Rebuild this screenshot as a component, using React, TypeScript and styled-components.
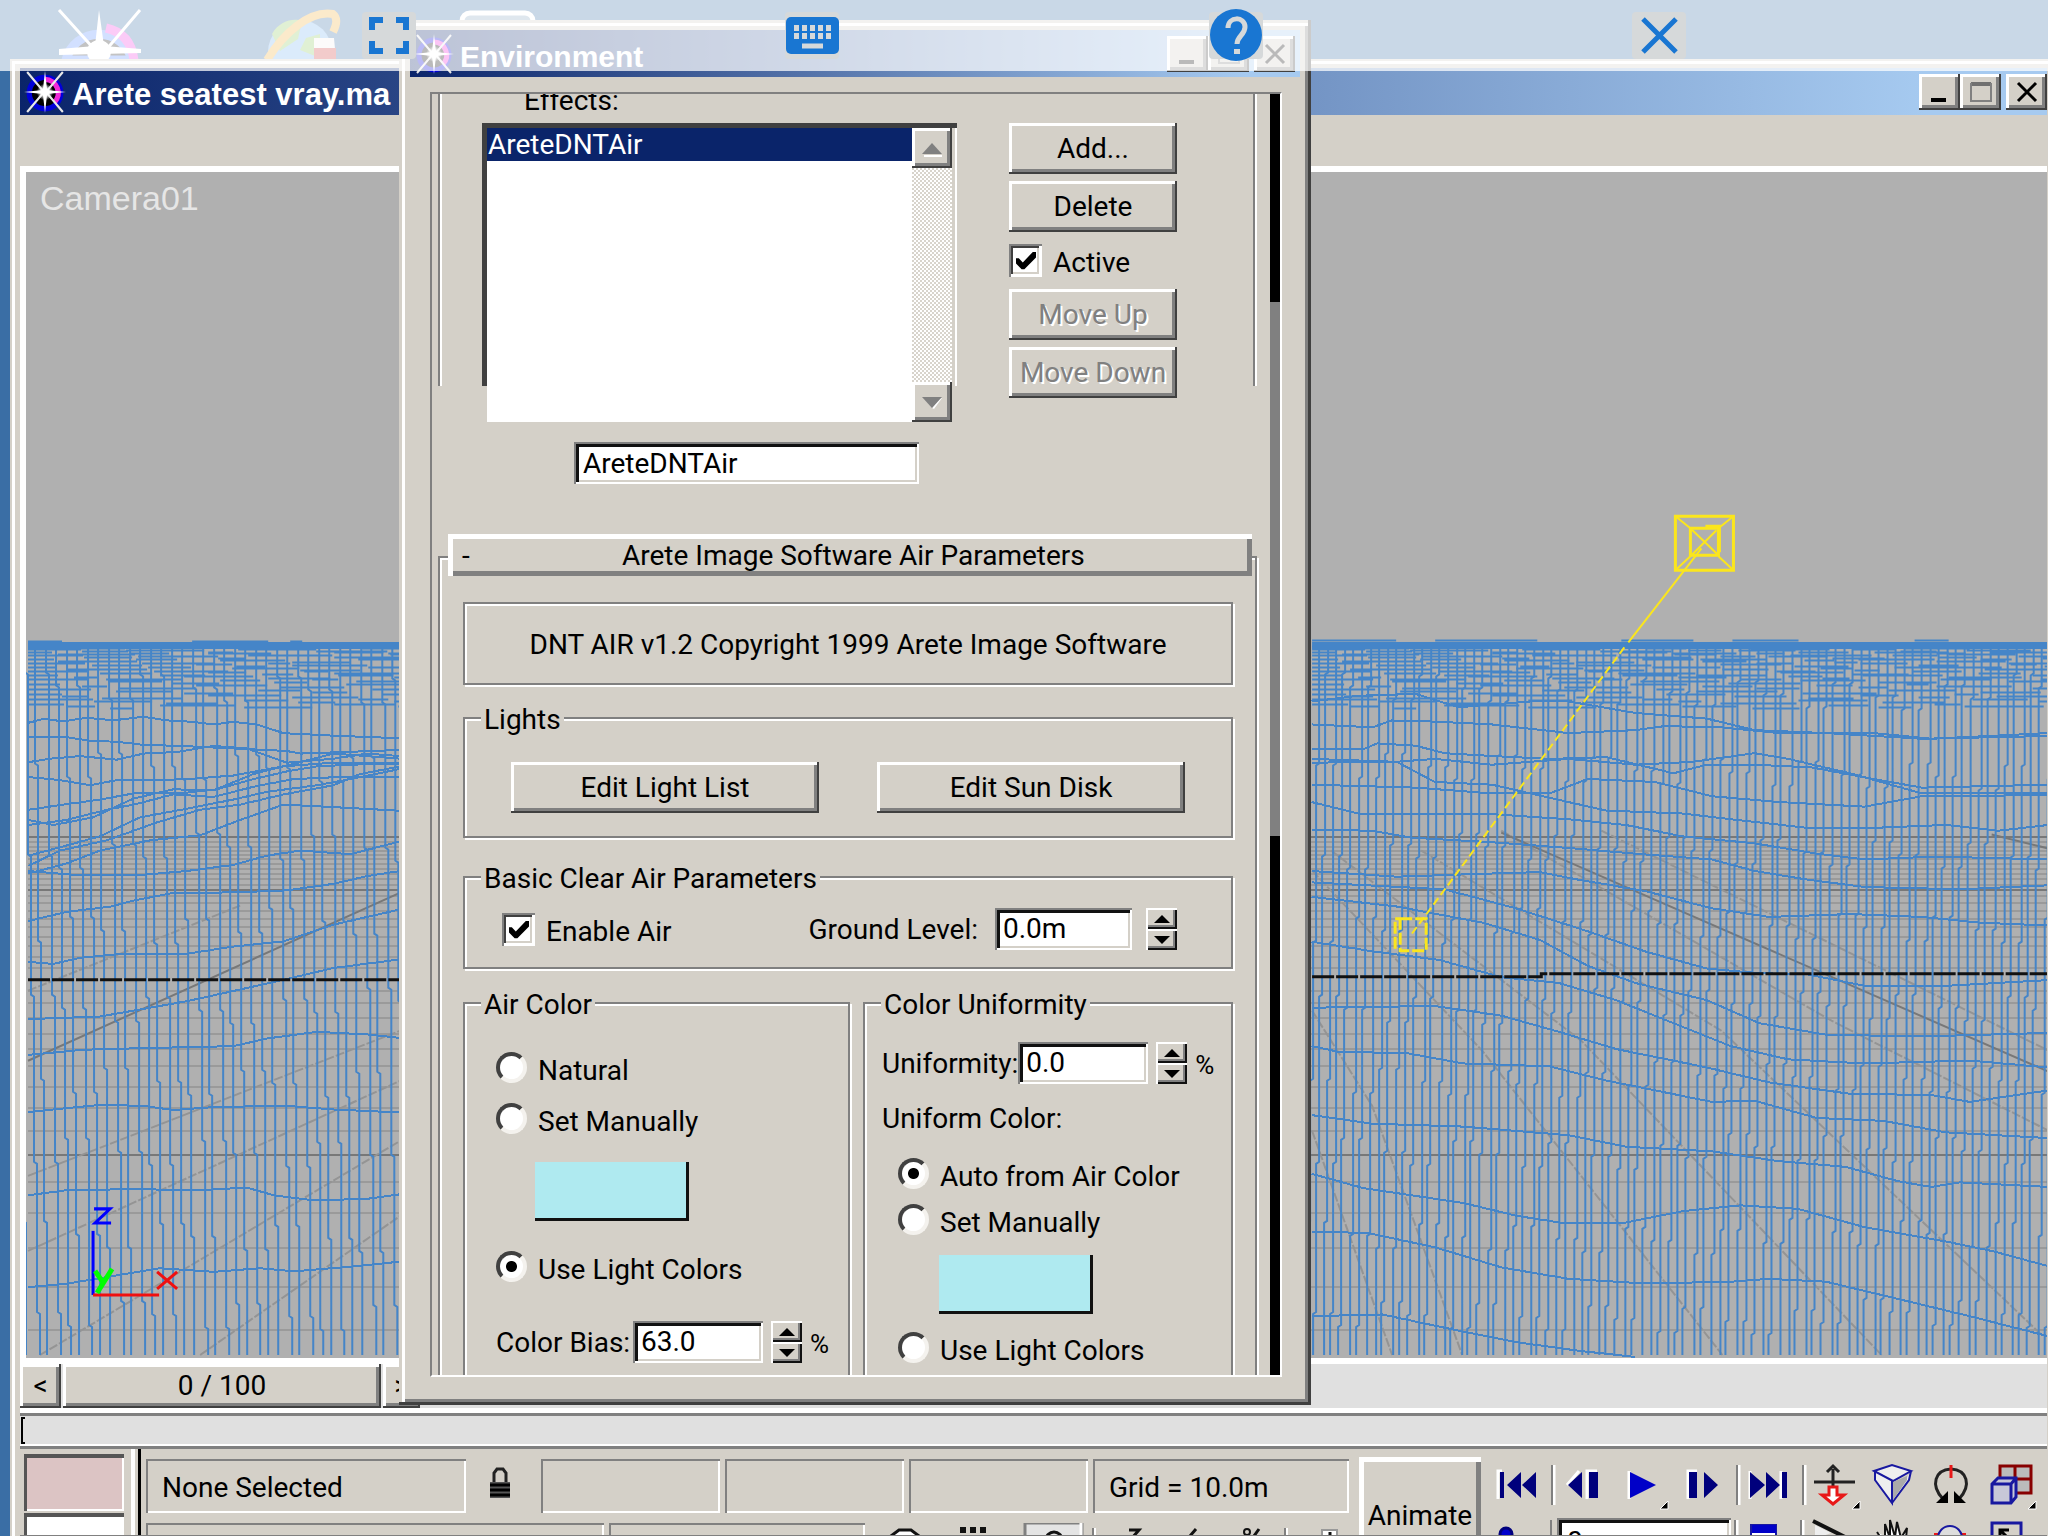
import React from "react";
import styled, { createGlobalStyle, css } from "styled-components";

const face = "#d4d0c8";
const shade = "#808080";
const dark = "#404040";
const wire = "#4585c8";
const ui = 'Roboto, "Liberation Sans", Arial, sans-serif';

const Global = createGlobalStyle`
  * { box-sizing: border-box; }
  body { margin: 0; background: #3a6ea5; overflow: hidden; }
  button, input { font: inherit; color: inherit; margin: 0; }
`;

const raised = css`
  background: ${face};
  border: 0;
  box-shadow: inset -2px -2px ${dark}, inset 3px 3px #fff, inset -5px -5px ${shade};
`;
const sunken = css`
  box-shadow: inset 2px 2px ${shade}, inset -2px -2px #fff, inset 5px 5px #111, inset -4px -4px ${face};
`;
const etched = css`
  border: 2px solid ${shade};
  box-shadow: inset 2px 2px #fff, 2px 2px #fff;
`;

const Desktop = styled.div`
  position: relative;
  height: 100vh;
  overflow: hidden;
  padding: 59px 0 0 10px;
  background: #3a6ea5;
  font: 28px/32px ${ui};
  color: #000;
`;
const DesktopArt = styled.svg`
  position: absolute;
  left: 0;
  top: 0;
`;

/* ---------- main window ---------- */
const MainWindow = styled.main`
  position: relative;
  height: 100%;
  display: flex;
  flex-direction: column;
  padding: 9px 1px 0 10px;
  background: ${face};
  box-shadow: inset 2px 2px ${face}, inset 5px 5px #fff;
`;
const TitleBar = styled.header<{ $size: number; $inset?: number }>`
  flex: none;
  display: flex;
  align-items: center;
  height: 47px;
  padding: 0 ${(p) => p.$inset || 0}px 0 4px;
  background: linear-gradient(90deg, #0a246a, #a6caf0 94%);
  color: #fff;
  font: bold ${(p) => p.$size}px/36px "Liberation Sans", Arial, sans-serif;
  white-space: nowrap;
`;
const Title = styled.h1`
  flex: 1;
  margin: 0 0 0 6px;
  padding-top: 6px;
  font: inherit;
`;
const Caption = styled.div`
  display: flex;
  color: #000;
`;
const CaptionButton = styled.button<{ $apart?: boolean }>`
  ${raised}
  width: 41px;
  height: 36px;
  padding: 0;
  margin-left: ${(p) => (p.$apart ? 5 : 0)}px;
  display: grid;
  place-items: center;
`;
const MenuGap = styled.div`
  flex: none;
  height: 51px;
`;
const Viewport = styled.section`
  position: relative;
  flex: 1;
  min-height: 0;
  border: 6px solid #fff;
  border-right: 0;
  background: #b0b0b0;
  overflow: hidden;
`;
const Scene = styled.svg`
  display: block;
  width: 100%;
  height: 100%;
`;
const CameraLabel = styled.h2`
  position: absolute;
  left: 14px;
  top: 6px;
  margin: 0;
  font: 34px/40px "Liberation Sans", Arial, sans-serif;
  color: #e6e6e6;
`;
const TimeRow = styled.div`
  flex: none;
  display: flex;
  gap: 2px;
  height: 44px;
  background: #e0e0e0;
`;
const TimeButton = styled.button<{ $w: number }>`
  ${raised}
  width: ${(p) => p.$w}px;
  padding: 0;
`;
const TrackBar = styled.div`
  flex: none;
  height: 41px;
  background: #e0e0e0;
  border-top: 5px solid #fff;
  border-bottom: 3px solid ${shade};
  box-shadow: inset 0 3px ${shade}, inset 0 -2px #fff;
  padding: 4px 0 2px 1px;
`;
const TrackStart = styled.div`
  width: 4px;
  height: 27px;
  border: 2px solid #000;
  border-right: 0;
`;

/* ---------- status area ---------- */
const Status = styled.footer`
  flex: none;
  display: flex;
  height: 87px;
  overflow: hidden;
  border-bottom: 1px solid ${shade};
`;
const Pads = styled.div`
  flex: none;
  width: 111px;
  padding: 5px 7px 0 4px;
  display: flex;
  flex-direction: column;
  gap: 2px;
`;
const Pad = styled.div<{ $c: string }>`
  flex: none;
  height: 57px;
  background: ${(p) => p.$c};
  box-shadow: inset 3px 4px #555, inset -2px -2px #fff;
`;
const Divider = styled.div`
  flex: none;
  width: 10px;
  margin-right: 5px;
  border-left: 4px solid #fff;
  border-right: 3px solid #000;
`;
const Info = styled.div`
  flex: 1;
  min-width: 0;
  display: flex;
  flex-direction: column;
  gap: 10px;
  padding-top: 10px;
`;
const InfoRow = styled.div`
  flex: none;
  display: flex;
  gap: 5px;
  height: 54px;
`;
const Field = styled.div<{ $w: number }>`
  flex: none;
  width: ${(p) => p.$w}px;
  padding: 13px 0 0 16px;
  box-shadow: inset 2px 2px ${shade}, inset -2px -2px #fff;
  white-space: nowrap;
`;
const LockButton = styled.button`
  flex: none;
  width: 65px;
  padding: 0 8px 0 0;
  border: 0;
  background: none;
`;
const ToolIcons = styled.svg`
  display: block;
  flex: none;
`;
const Animate = styled.button`
  ${raised}
  flex: none;
  width: 122px;
  height: 116px;
  margin: 8px 12px 0 10px;
  padding: 2px 0 0;
  box-shadow: inset 5px 5px #fff, inset -5px -5px ${shade};
`;
const Controls = styled.div`
  flex: none;
  width: 554px;
  padding-top: 12px;
`;
const FrameRow = styled.div`
  display: flex;
  margin-top: 7px;
`;
const FrameInput = styled.input`
  ${sunken}
  width: 174px;
  height: 46px;
  border: 0;
  padding: 4px 10px;
  background: #fff;
`;

/* ---------- Environment dialog ---------- */
const Dialog = styled.section`
  position: absolute;
  left: 399px;
  top: 20px;
  bottom: 131px;
  width: 912px;
  display: flex;
  flex-direction: column;
  padding: 10px 11px 28px;
  background: ${face};
  box-shadow: inset -3px -3px ${dark}, inset 3px 3px ${face}, inset 6px 6px #fff, inset -6px -6px ${shade};
`;
const Panel = styled.div`
  flex: 1;
  min-height: 0;
  display: flex;
  margin: 15px 18px 0 20px;
  border: 2px solid;
  border-color: ${shade} #fff #fff ${shade};
  overflow: hidden;
`;
const Scrolled = styled.div`
  flex: 1;
  height: 100%;
  overflow: hidden;
  padding: 0 15px 0 6px;
`;
const ScrollStrip = styled.div`
  width: 10px;
  background: linear-gradient(#000 208px, ${shade} 208px 742px, #000 742px);
`;
const EffectsFrame = styled.div`
  display: flow-root;
  height: 292px;
  border: 2px solid ${shade};
  border-width: 0 2px;
  box-shadow: inset 2px 0 #fff, 2px 0 #fff;
`;
const EffectsLabel = styled.div`
  margin-top: -9px;
  padding-left: 84px;
`;
const EffectsBody = styled.div`
  display: flex;
  align-items: flex-start;
  gap: 52px;
  padding: 6px 0 0 42px;
`;
const ListFrame = styled.div`
  flex: none;
  width: 475px;
  height: 263px;
  border: 0 solid ${dark};
  border-width: 5px 0 0 5px;
  box-shadow: inset -2px 0 #fff;
`;
const ListInner = styled.div`
  display: flex;
  width: 465px;
  height: 294px;
  background: #fff;
`;
const List = styled.ul`
  flex: 1;
  margin: 0;
  padding: 0;
  list-style: none;
`;
const ListItem = styled.li`
  height: 33px;
  line-height: 34px;
  padding-left: 1px;
  background: #0a246a;
  color: #fff;
`;
const ScrollBar = styled.div`
  width: 40px;
  display: flex;
  flex-direction: column;
  justify-content: space-between;
  background: repeating-conic-gradient(#fff 0 25%, #d8d4cc 0 50%) 0 0 / 4px 4px;
`;
const ScrollButton = styled.button`
  ${raised}
  height: 40px;
  padding: 0;
`;
const Side = styled.div`
  display: flex;
  flex-direction: column;
  gap: 7px;
`;
const Push = styled.button<{ $w: number }>`
  ${raised}
  width: ${(p) => p.$w}px;
  height: 51px;
  padding: 0;
  white-space: nowrap;
  &:disabled {
    color: ${shade};
    text-shadow: 2px 2px #fff;
  }
`;
const Choice = styled.label<{ $gap?: number; $after?: number }>`
  display: flex;
  align-items: flex-start;
  gap: 11px;
  height: 32px;
  line-height: 37px;
  margin-top: ${(p) => p.$gap || 0}px;
  margin-bottom: ${(p) => p.$after || 0}px;
  white-space: nowrap;
`;
const Check = styled.input`
  appearance: none;
  width: 33px;
  height: 33px;
  background: #fff;
  box-shadow: inset 2px 2px ${shade}, inset -3px -3px #fff, inset 4px 4px ${dark}, inset -5px -5px ${face};
  &:checked::before {
    content: "";
    display: block;
    width: 20px;
    height: 19px;
    margin: 7px 0 0 7px;
    background: #000;
    clip-path: polygon(0 38%, 14% 38%, 34% 60%, 84% 5%, 100% 5%, 100% 34%, 42% 96%, 28% 96%, 0 66%);
  }
`;
const Radio = styled.input`
  appearance: none;
  width: 31px;
  height: 31px;
  border-radius: 50%;
  border: 4px solid;
  border-color: ${dark} #f4f2ee #f4f2ee ${dark};
  background: #fff;
  &:checked {
    background: radial-gradient(#000 5px, #fff 6px);
  }
`;
const NameInput = styled.input`
  ${sunken}
  display: block;
  width: 345px;
  height: 42px;
  margin: 56px 0 0 136px;
  border: 0;
  padding: 0 9px;
  background: #fff;
`;
const Rollout = styled.div`
  ${etched}
  margin: 72px -2px 0 0;
  padding: 0 22px 0 23px;
  height: 900px;
`;
const RolloutHeader = styled.button`
  display: flex;
  width: calc(100% + 34px);
  height: 42px;
  margin: -24px -19px 26px -15px;
  padding: 2px 15px 0 14px;
  align-items: center;
  border: 0;
  background: ${face};
  box-shadow: inset 5px 5px #fff, inset -5px -5px ${shade};
`;
const RolloutTitle = styled.span`
  flex: 1;
  text-align: center;
`;
const Notice = styled.p`
  ${etched}
  height: 83px;
  margin: 0 0 15px;
  text-align: center;
  line-height: 82px;
`;
const Group = styled.fieldset<{ $gap?: number }>`
  ${etched}
  min-width: 0;
  margin: 0 0 ${(p) => p.$gap || 0}px;
  padding: 0;
`;
const GroupBody = styled.div<{ $pad: string }>`
  padding: ${(p) => p.$pad};
`;
const Legend = styled.legend`
  margin-left: 16px;
  padding: 4px 3px 0;
  background: ${face};
  line-height: 32px;
`;
const Row = styled.div<{ $gap?: number }>`
  display: flex;
  align-items: center;
  margin-top: ${(p) => p.$gap || 0}px;
  white-space: nowrap;
`;
const Spread = styled(Row)`
  justify-content: space-between;
`;
const Columns = styled.div`
  display: grid;
  grid-template-columns: 387px 1fr;
  gap: 13px;
`;
const Indent = styled.div`
  padding-left: 16px;
`;
const NumInput = styled.input<{ $wide?: boolean }>`
  ${sunken}
  width: ${(p) => (p.$wide ? 137 : 130)}px;
  height: 42px;
  border: 0;
  margin-left: ${(p) => (p.$wide ? 0 : "auto")};
  margin-right: ${(p) => (p.$wide ? 14 : 8)}px;
  padding: 0 8px 2px;
  background: #fff;
`;
const NumLabel = styled.label<{ $end?: boolean }>`
  padding-top: 2px;
  margin-left: ${(p) => (p.$end ? "auto" : 0)};
  margin-right: ${(p) => (p.$end ? 17 : 0)}px;
`;
const Spinner = styled.span`
  display: flex;
  flex-direction: column;
`;
const SpinButton = styled.button`
  width: 31px;
  height: 21px;
  padding: 0;
  border: 0;
  background: ${face};
  box-shadow: inset 2px 2px #fff, inset -2px -2px #111, inset -4px -4px ${shade};
  display: grid;
  place-items: center;
`;
const Percent = styled.span`
  width: 20px;
  margin-left: 8px;
  padding-top: 4px;
  font-size: 26px;
`;
const Swatch = styled.button<{ $gap: number; $left: number }>`
  display: block;
  width: 154px;
  height: 59px;
  margin: ${(p) => p.$gap}px 0 0 ${(p) => p.$left}px;
  padding: 0;
  border: 0;
  background: #afeaf0;
  box-shadow: inset -3px -3px #111;
`;

/* ---------- remote-control overlay ---------- */
const Overlay = styled.nav`
  position: absolute;
  left: 0;
  right: 0;
  top: 0;
  height: 71px;
  display: flex;
  justify-content: space-between;
  align-items: flex-start;
  padding: 12px 362px 0;
  background: rgba(255, 255, 255, 0.73);
`;
const OverlayButton = styled.button`
  width: 54px;
  height: 47px;
  padding: 0;
  border: 0;
  border-radius: 4px;
  background: #d6d9da;
  svg {
    display: block;
    overflow: visible;
  }
`;

/* ---------- drawings ---------- */
const Star = ({ size, id }: { size: number; id: string }) => (
  <svg width={size} height={size} viewBox="0 0 40 40" aria-hidden="true">
    <defs>
      <radialGradient id={id}>
        <stop offset="0" stopColor="#fff" />
        <stop offset="0.4" stopColor="#fff" />
        <stop offset="1" stopColor="#fff" stopOpacity="0" />
      </radialGradient>
    </defs>
    <circle cx="20" cy="21" r="15" fill="#000" stroke="#0000d8" strokeWidth="5" />
    <path d="M20 8a13 13 0 0 1 9 22" fill="none" stroke="#f028d8" strokeWidth="5" />
    <path d="M3 1l16 19M37 1L21 20M3 39l16-19M37 39L21 20" stroke="#e8e8e8" strokeWidth="2" />
    <path d="M20 0l2 18 18 2-18 2-2 18-2-18-18-2 18-2z" fill="#fff" />
    <circle cx="20" cy="20" r="8" fill={`url(#${id})`} />
  </svg>
);

const MinIcon = () => (
  <svg width="22" height="22" aria-hidden="true"><path d="M2 19h15" stroke="currentColor" strokeWidth="4" /></svg>
);
const MaxIcon = () => (
  <svg width="24" height="24" aria-hidden="true"><path d="M2 4h20" stroke="#707070" strokeWidth="4" /><path d="M2 3v18h20V3" fill="none" stroke="#808080" strokeWidth="2" /></svg>
);
const CloseIcon = () => (
  <svg width="22" height="22" aria-hidden="true"><path d="M2 2l18 18M20 2L2 20" stroke="currentColor" strokeWidth="3" /></svg>
);
const Arrow = ({ down, dim }: { down?: boolean; dim?: boolean }) => (
  <svg width={dim ? 22 : 16} height={dim ? 16 : 8} viewBox={dim ? "-1 -2 22 16" : "0 0 16 8"} aria-hidden="true">
    {dim && <path d={down ? "M20 1L12 12l-2-1 8-10z" : "M2 12h18v2H2z"} fill="#fff" />}
    <path d={dim ? (down ? "M0 0h20L10 11z" : "M0 11h20L10 0z") : down ? "M0 0h16L8 8z" : "M0 8h16L8 0z"} fill={dim ? shade : "#000"} />
  </svg>
);

type Pt = [number, number];
const pts = (s: string) => s.split(" ").map((p) => p.split(",").map(Number) as Pt);
const L = (s: string) => pts(s).map(([x, y]) => `${(x / 3).toFixed(1)},${(600 + y / 1.96).toFixed(1)}`).join(" ");
const R = (s: string) => pts(s).map(([x, y]) => `${(1300 + x / 2.096).toFixed(1)},${(480 + y / 1.742).toFixed(1)}`).join(" ");

const leftWaves = [
  "85,240 130,232 190,237 260,230 340,235 430,228 500,235 580,238 640,243 700,238 770,243 850,260 1000,265 1200,270",
  "85,267 190,267 270,275 350,277 430,283 540,285 700,290 860,295 900,300 1200,293",
  "85,317 150,310 240,305 350,312 430,300 530,297 640,285 740,290 860,318 1000,310 1100,300 1200,305",
  "85,346 180,352 270,362 350,352 460,352 560,350 700,343 850,325 1000,318 1200,320",
  "85,410 190,400 300,390 400,378 540,378 650,370 760,350 860,335 950,325 1200,318",
  "85,440 200,430 320,410 400,400 520,380 640,385 760,365 880,350 1050,345 1200,345",
  "85,430 160,440 280,425 400,388 520,370 640,372 760,340 880,320 1000,300 1200,310",
  "85,500 200,480 300,462 420,425 560,408 700,390 800,375 950,362 1050,350 1200,330",
  "85,520 180,490 320,470 470,435 600,410 720,400 850,380 1000,362 1080,340 1200,325",
  "85,535 200,515 300,490 450,470 600,460 720,430 850,400 1000,405 1200,412",
  "85,530 230,538 420,538 560,530 700,518 800,500 900,490 1050,497 1200,472",
  "85,628 200,610 330,600 400,588 520,573 700,572 860,568 1000,555 1100,540 1200,530",
  "85,708 160,712 240,700 370,692 560,692 700,678 850,668 1000,635 1200,605",
  "85,820 300,815 430,800 560,785 700,765 850,743 1000,720 1200,703",
  "85,890 250,880 430,877 700,873 800,858 950,845 1100,850 1200,857",
  "85,1002 190,995 300,988 430,990 520,998 650,992 860,990 1000,997 1200,1003",
  "85,1165 200,1155 400,1153 600,1155 740,1150 820,1165 940,1175 1100,1172 1200,1163",
  "85,1345 200,1338 350,1322 480,1308 640,1315 780,1308 880,1314 1050,1305 1200,1295",
];
const rightWaves = [
  "22,425 150,430 190,418 280,420 400,425 560,440 700,435 760,428 880,430 1000,440 1200,440 1320,450 1565,440",
  "22,385 120,375 240,372 330,395 480,385 560,385 700,405 850,415 950,435 1100,440 1300,450 1565,445",
  "22,468 130,468 160,458 240,462 300,475 400,480 520,485 640,482 780,510 850,495 950,495 1070,500 1200,520 1300,535 1565,530",
  "22,492 120,490 200,490 280,485 400,495 560,485 700,495 820,490 950,475 1020,485 1150,510 1300,545 1565,545",
  "22,485 200,490 280,525 400,530 480,545 560,560 640,575 800,580 900,590 1060,605 1200,605 1350,600 1460,610 1565,600",
  "22,530 240,535 400,545 520,545 600,520 740,525 860,550 1000,560 1180,568 1300,550 1565,548",
  "22,560 120,580 380,580 560,590 680,600 800,620 950,632 1080,650 1180,660 1330,655 1565,660",
  "22,608 150,610 230,622 400,630 560,640 700,650 860,660 950,680 1060,695 1180,708 1380,712 1565,705",
  "22,680 200,690 380,685 500,682 580,695 720,715 860,745 980,760 1150,755 1300,760 1420,770 1565,775",
  "22,700 300,712 450,745 600,785 720,820 850,850 960,858 1060,860 1180,880 1350,880 1565,870",
  "22,725 200,742 380,770 500,800 600,845 700,875 850,905 960,945 1100,965 1300,968 1565,962",
  "22,803 150,820 290,835 420,865 540,875 660,905 780,945 900,985 1020,1008 1180,1015 1400,1010 1565,1022",
  "22,918 280,915 420,932 540,960 660,990 850,1022 980,1048 1150,1068 1320,1070 1400,1082 1565,1062",
  "22,985 80,995 220,997 340,1015 520,1020 640,1045 760,1065 860,1082 950,1080 1080,1110 1220,1115 1350,1135 1565,1145",
  "22,1105 150,1120 340,1125 560,1140 680,1160 860,1168 1000,1185 1140,1195 1250,1220 1320,1230 1380,1222 1565,1230",
  "22,1207 130,1232 340,1258 450,1280 550,1293 680,1292 800,1272 920,1262 1040,1268 1180,1300 1350,1325 1450,1342 1565,1368",
  "22,1308 140,1310 280,1335 420,1370 560,1390 720,1398 900,1395 980,1390 1100,1395 1250,1425 1400,1455 1565,1490",
  "22,1455 170,1452 300,1475 450,1500 580,1515 700,1526",
];

const columns = (x0: number, x1: number, step: number, dir: number) => {
  const rows = [690, 770, 850, 925, 1005, 1078, 1150, 1235, 1315];
  let d = "";
  for (let i = 0, x = x0; x < x1; i++, x = x0 + i * step) {
    const band = Math.floor(i / 4);
    d += `M${Math.round(x)} 644`;
    rows.forEach((r, k) => {
      if ((band + i + k) % 2 === 0) return;
      const y = r + ((band * 13 + k * 11) % 37) - 18;
      d += `V${y}l${dir * 3} 2`;
    });
    d += "V1354";
  }
  return d;
};

/* Far waves: short broken runs that thicken towards the horizon. */
const ripples = (x0: number, x1: number) => {
  let d = "";
  for (let r = 0; r < 15; r++) {
    const y = 648 + r * 3 + Math.floor((r * r) / 12);
    for (let x = x0, i = 0; x < x1; i++) {
      const len = 22 + ((i * 53 + r * 31) % 60);
      const dy = ((i * 7 + r * 5) % 5) - 2;
      d += `M${x} ${y + dy}h${Math.min(len, x1 - x)}`;
      x += len + ((i * 13 + r * 7) % (4 + r * 2));
    }
  }
  return d;
};

const gridYs = [841, 846, 850, 854, 858, 863, 868, 873, 878, 884, 895, 902, 910, 918, 926, 936, 945, 956, 967, 990, 1002, 1017, 1033, 1048, 1065, 1086, 1107, 1130, 1181, 1212, 1247, 1286, 1329];

const Sea = () => (
  <Scene viewBox="26 172 2021 1185" preserveAspectRatio="xMinYMin slice" aria-hidden="true">
    <g shapeRendering="crispEdges">
      <path d={gridYs.map((y) => `M28 ${y}H2047`).join("")} stroke="#9a9a9a" strokeWidth="2" />
      <path d="M28 836H2047M28 889H2047M28 1154H2047" stroke="#787878" strokeWidth="2" />
    </g>
    <path d="M28 1175L400 1030M28 1250L400 1080M40 1354L400 1140M200 1354L400 1215M28 990L240 905M1311 1010l60 95 90 249M1311 870l170 180 240 304M1330 850l250 190 300 314M1420 850l300 180 320 304M1500 830l330 190 217 110M1600 830l447 220M1311 1130l80 224" fill="none" stroke="#949494" strokeWidth="2" strokeDasharray="9 2" />
    <path d="M28 1060L400 892M1500 832L2047 1071M1990 834l57 14" stroke="#787878" strokeWidth="2" fill="none" />
    <g fill="none" stroke={wire} strokeWidth="2">
      <path d={columns(14, 400, 10.5, 1) + columns(1318, 2070, 8.6, -1)} />
      <path d={ripples(28, 400) + ripples(1311, 2047)} />
      {leftWaves.map((w) => <polyline key={w} points={L(w)} shapeRendering="crispEdges" />)}
      {rightWaves.map((w) => <polyline key={w} points={R(w)} shapeRendering="crispEdges" />)}
      <path d="M28 641h34M192 641h76M290 641h12M1311 640h84M1434 640h102M1620 640h72M1731 640h66M1913 640h34" />
    </g>
    <path d="M28 645H400M1311 645H2047" stroke={wire} strokeWidth="7" />
    <path d="M28 979H400M1311 976H1540V973H2047" fill="none" stroke="#111" strokeWidth="3" strokeDasharray="22 2" />
    <g fill="none" stroke="#fbe61c" strokeWidth="3">
      <path d="M1674 516h58v54h-58z" />
      <path d="M1674 516l15 12M1732 516l-15 12M1674 570l15-14M1732 570l-15-14M1689 528l28 27M1715 530l-26 26" strokeWidth="2" />
      <path d="M1689 528h28v27h-28zM1704 526h14v26" />
      <path d="M1700 548L1627 642" strokeWidth="2" />
      <path d="M1623 647L1410 934" strokeDasharray="8 4" strokeWidth="2" />
      <path d="M1399 918h26v32h-26zM1394 948v-30h6" strokeDasharray="12 3" />
    </g>
    <g fill="none" strokeWidth="3">
      <path d="M93 1230v64" stroke="#00f" />
      <path d="M94 1208h16l-15 14h16" stroke="#00f" />
      <path d="M93 1294h66M157 1271l20 17M177 1271l-20 17" stroke="#f01010" />
      <path d="M95 1270l9 13M112 1268l-15 24" stroke="#0f0" strokeWidth="5" />
    </g>
  </Scene>
);

const PlaybackIcons = () => (
  <ToolIcons width="554" height="50" viewBox="1494 1460 554 50" aria-hidden="true">
    <g fill="none" stroke="#fff" strokeWidth="3">
      <path d="M1555 1464v40M1740 1464v40M1806 1464v40" />
      <path d="M1499 1498v-28h4M1568 1484l12-14M1588 1498v-28h10M1630 1498v-28M1689 1498v-28h9M1751 1498v-28M1782 1498v-28" />
    </g>
    <path d="M1553 1464v40M1738 1464v40M1804 1464v40" stroke={shade} strokeWidth="2" />
    <g fill="#00007c">
      <path d="M1501 1471h4v26h-4zM1522 1471v26l-14-13zM1537 1471v26l-14-13z" />
      <path d="M1583 1471v26l-14-13zM1590 1471h9v26h-9z" />
      <path d="M1690 1471h8v26h-8zM1705 1471v26l14-13z" />
      <path d="M1751 1471v26l15-13zM1767 1471v26l14-13zM1783 1471h5v26h-5z" />
    </g>
    <path d="M1631 1471v26l26-13z" fill="#0000c8" />
    <path d="M1669 1500v8h-8zM1861 1500v8h-8zM2037 1500v8h-8z" fill="#000" stroke="#fff" strokeWidth="1" />
    <path d="M1815 1481h41M1834 1490v-22M1828 1471l6-6 6 6" fill="none" stroke="#222" strokeWidth="3" />
    <path d="M1830 1486h8v8h7l-11 9-11-9h7z" fill="#fff" stroke="#e81818" strokeWidth="3" />
    <path d="M1875 1470l18-6 19 6-18 10zM1893 1480v22l-17-23v-9M1893 1502l17-23 2-9" fill="#eee" stroke="#1818a0" strokeWidth="2" />
    <path d="M1894 1481v18l14-20v-4z" fill="#aaa" />
    <path d="M1944 1498c-13-14-8-29 8-30 16 1 21 16 8 30" fill="none" stroke="#222" strokeWidth="3" />
    <path d="M1937 1502h12v-12zM1967 1502h-12v-12z" fill="#000" />
    <path d="M1952 1464v13" stroke="#e81818" strokeWidth="3" />
    <path d="M2001 1465h31v27h-31zM2016 1465v27M2001 1478h31" fill="#bbb" stroke="#880000" strokeWidth="3" />
    <path d="M1993 1483l6-6h18v19l-5 6h-19zM1993 1483h19v19M2012 1483l5-6" fill="#c8c8d8" stroke="#1818a0" strokeWidth="3" />
  </ToolIcons>
);

const NavIcons = () => (
  <ToolIcons width="310" height="30" viewBox="1734 1517 310 30" aria-hidden="true">
    <path d="M1740 1519v28M1806 1519v28" stroke="#fff" strokeWidth="3" />
    <path d="M1738 1519v28M1804 1519v28" stroke={shade} strokeWidth="2" />
    <path d="M1754 1524h25v20h-25z" fill="#fff" stroke="#1818a0" strokeWidth="2" />
    <path d="M1755 1524h24v8h-24z" fill="#0000c8" />
    <path d="M1816 1520l32 16" stroke="#111" strokeWidth="4" />
    <path d="M1818 1524l16 8-16 6z" fill="#eee" />
    <path d="M1880 1531l8 12v-20l5 14v-18l5 17 2-15 4 16 6-10-2 20" fill="#fff" stroke="#111" strokeWidth="2" />
    <path d="M1937 1534h32" stroke="#e81818" strokeWidth="4" />
    <circle cx="1953" cy="1537" r="12" fill="#ddd" stroke="#1818a0" strokeWidth="2" />
    <path d="M1995 1522h29v25h-29z" fill="#d4d0c8" stroke="#1818a0" strokeWidth="3" />
    <path d="M2003 1529l12 12M2003 1540v-11h9" fill="none" stroke="#000" strokeWidth="3" />
  </ToolIcons>
);

const SnapIcons = () => (
  <ToolIcons width="484" height="30" viewBox="870 1523 484 30" aria-hidden="true">
    <path d="M891 1536l8-6h12l8 6v12h-28z" fill="#fff" stroke="#111" strokeWidth="3" />
    <path d="M960 1530h26M960 1539h26" stroke="#111" strokeWidth="6" strokeDasharray="6 4" />
    <path d="M1025 1523h57v30h-57z" fill="#e4e4e4" stroke={shade} strokeWidth="3" />
    <path d="M1081 1523v30" stroke="#fff" strokeWidth="3" />
    <circle cx="1054" cy="1540" r="8" fill="none" stroke="#111" strokeWidth="3" />
    <path d="M1093 1528v20M1285 1528v20" stroke={shade} strokeWidth="2" />
    <path d="M1095 1528v20M1287 1528v20" stroke="#fff" strokeWidth="2" />
    <path d="M1129 1530h10l-7 8M1196 1529l-12 14M1259 1529l-10 14" fill="none" stroke="#111" strokeWidth="3" />
    <circle cx="1247" cy="1532" r="3" fill="none" stroke="#111" strokeWidth="2" />
    <path d="M1322 1530h15v15h-15z" fill="#fff" stroke="#999" strokeWidth="2" />
    <path d="M1330 1532v10" stroke="#111" strokeWidth="3" />
  </ToolIcons>
);

const Spin = ({ name }: { name: string }) => (
  <Spinner>
    <SpinButton aria-label={`Increase ${name}`}><Arrow /></SpinButton>
    <SpinButton aria-label={`Decrease ${name}`}><Arrow down /></SpinButton>
  </Spinner>
);

export default function App() {
  return (
    <>
      <Global />
      <Desktop>
        <DesktopArt width="560" height="60" viewBox="0 0 560 60" aria-hidden="true">
          <path d="M66 60a34 34 0 0 1 66 0z" fill="#222" stroke="#5a8cff" strokeWidth="9" />
          <path d="M106 28c18 4 26 16 28 32" fill="none" stroke="#f040e0" strokeWidth="9" />
          <path d="M59 10l36 40M140 10l-34 40" stroke="#fff" strokeWidth="3" />
          <path d="M99 10l5 36 37 3v4l-82 2v-6l36-3z" fill="#fff" />
          <circle cx="99" cy="52" r="12" fill="#fff" />
          <circle cx="300" cy="52" r="32" fill="#7ab4f0" />
          <path d="M272 34c8-14 22-16 30-13l-4 18-18 12zM300 50l20 8v-24l-14 4z" fill="#8cc860" />
          <path d="M267 60c16-26 42-50 66-46 5 4 3 12 0 18" fill="none" stroke="#f0b040" strokeWidth="8" />
          <path d="M314 38h20l2 22h-22z" fill="#f4f0f0" />
          <path d="M314 48h22v12h-22z" fill="#d04040" />
          <rect x="462" y="13" width="71" height="40" rx="8" fill="#8aa8c0" stroke="#fff" strokeWidth="5" />
        </DesktopArt>

        <MainWindow>
          <TitleBar $size={31}>
            <Star size={42} id="starMain" />
            <Title>Arete seatest vray.ma</Title>
            <Caption>
              <CaptionButton aria-label="Minimize"><MinIcon /></CaptionButton>
              <CaptionButton aria-label="Maximize"><MaxIcon /></CaptionButton>
              <CaptionButton aria-label="Close" $apart><CloseIcon /></CaptionButton>
            </Caption>
          </TitleBar>
          <MenuGap />
          <Viewport>
            <Sea />
            <CameraLabel>Camera01</CameraLabel>
          </Viewport>
          <TimeRow>
            <TimeButton $w={41} aria-label="Previous frame">&lt;</TimeButton>
            <TimeButton $w={318}>0 / 100</TimeButton>
            <TimeButton $w={37} aria-label="Next frame">&gt;</TimeButton>
          </TimeRow>
          <TrackBar><TrackStart /></TrackBar>
          <Status>
            <Pads>
              <Pad $c="#dcc4c4" />
              <Pad $c="#fff" />
            </Pads>
            <Divider />
            <Info>
              <InfoRow>
                <Field $w={320}>None Selected</Field>
                <LockButton aria-label="Lock selection">
                  <svg width="24" height="32" viewBox="0 0 24 32" aria-hidden="true">
                    <path d="M6 16V6l3-4h6l3 4v10" fill="none" stroke="#222" strokeWidth="3" />
                    <path d="M2 15h20v16H2z" fill="#555" />
                    <path d="M2 18h20M2 23h20M2 28h20" stroke="#000" strokeWidth="3" />
                  </svg>
                </LockButton>
                <Field $w={179} />
                <Field $w={179} />
                <Field $w={179} />
                <Field $w={256}>Grid = 10.0m</Field>
              </InfoRow>
              <InfoRow>
                <Field $w={458} />
                <Field $w={256} />
                <SnapIcons />
              </InfoRow>
            </Info>
            <Animate>Animate</Animate>
            <Controls>
              <PlaybackIcons />
              <FrameRow>
                <ToolIcons width="64" height="30" viewBox="1494 1517 64 30" aria-hidden="true">
                  <circle cx="1507" cy="1533" r="6" fill="#00c" stroke="#00007c" strokeWidth="3" />
                  <path d="M1513 1536h20" stroke="#fff" strokeWidth="4" />
                  <path d="M1552 1519v28" stroke={shade} strokeWidth="2" />
                </ToolIcons>
                <FrameInput aria-label="Current frame" defaultValue="0" />
                <NavIcons />
              </FrameRow>
            </Controls>
          </Status>
        </MainWindow>

        <Dialog>
          <TitleBar $size={30} $inset={5}>
            <Star size={40} id="starDialog" />
            <Title>Environment</Title>
            <Caption>
              <CaptionButton aria-label="Minimize dialog"><MinIcon /></CaptionButton>
              <CaptionButton aria-label="Maximize dialog"><MaxIcon /></CaptionButton>
              <CaptionButton aria-label="Close dialog" $apart><CloseIcon /></CaptionButton>
            </Caption>
          </TitleBar>
          <Panel>
            <Scrolled>
              <EffectsFrame>
                <EffectsLabel>Effects:</EffectsLabel>
                <EffectsBody>
                  <ListFrame>
                    <ListInner>
                      <List role="listbox" aria-label="Effects">
                        <ListItem role="option" aria-selected="true">AreteDNTAir</ListItem>
                      </List>
                      <ScrollBar>
                        <ScrollButton aria-label="Scroll up"><Arrow dim /></ScrollButton>
                        <ScrollButton aria-label="Scroll down"><Arrow dim down /></ScrollButton>
                      </ScrollBar>
                    </ListInner>
                  </ListFrame>
                  <Side>
                    <Push $w={168}>Add...</Push>
                    <Push $w={168}>Delete</Push>
                    <Choice $gap={5} $after={6}><Check type="checkbox" defaultChecked />Active</Choice>
                    <Push $w={168} disabled>Move Up</Push>
                    <Push $w={168} disabled>Move Down</Push>
                  </Side>
                </EffectsBody>
              </EffectsFrame>
              <NameInput aria-label="Effect name" defaultValue="AreteDNTAir" />
              <Rollout>
                <RolloutHeader>
                  <span>-</span>
                  <RolloutTitle>Arete Image Software Air Parameters</RolloutTitle>
                </RolloutHeader>
                <Notice>DNT AIR v1.2 Copyright 1999 Arete Image Software</Notice>
                <Group $gap={21}>
                  <Legend>Lights</Legend>
                  <GroupBody $pad="26px 46px 23px">
                    <Spread>
                      <Push $w={308}>Edit Light List</Push>
                      <Push $w={308}>Edit Sun Disk</Push>
                    </Spread>
                  </GroupBody>
                </Group>
                <Group $gap={16}>
                  <Legend>Basic Clear Air Parameters</Legend>
                  <GroupBody $pad="13px 54px 17px 37px">
                    <Row>
                      <Choice><Check type="checkbox" defaultChecked />Enable Air</Choice>
                      <NumLabel $end htmlFor="ground">Ground Level:</NumLabel>
                      <NumInput $wide id="ground" defaultValue="0.0m" />
                      <Spin name="ground level" />
                    </Row>
                  </GroupBody>
                </Group>
                <Columns>
                  <Group>
                    <Legend>Air Color</Legend>
                    <GroupBody $pad="31px 18px 60px 31px">
                      <Choice><Radio type="radio" name="air" />Natural</Choice>
                      <Choice $gap={19}><Radio type="radio" name="air" />Set Manually</Choice>
                      <Swatch $gap={27} $left={39} aria-label="Air color" />
                      <Choice $gap={30}><Radio type="radio" name="air" defaultChecked />Use Light Colors</Choice>
                      <Row $gap={38}>
                        <NumLabel htmlFor="bias">Color Bias:</NumLabel>
                        <NumInput id="bias" defaultValue="63.0" />
                        <Spin name="color bias" />
                        <Percent>%</Percent>
                      </Row>
                    </GroupBody>
                  </Group>
                  <Group>
                    <Legend>Color Uniformity</Legend>
                    <GroupBody $pad="21px 17px 60px 17px">
                      <Row>
                        <NumLabel htmlFor="uniformity">Uniformity:</NumLabel>
                        <NumInput id="uniformity" defaultValue="0.0" />
                        <Spin name="uniformity" />
                        <Percent>%</Percent>
                      </Row>
                      <Row $gap={19}>Uniform Color:</Row>
                      <Indent>
                        <Choice $gap={23}><Radio type="radio" name="uniform" defaultChecked />Auto from Air Color</Choice>
                        <Choice $gap={14}><Radio type="radio" name="uniform" />Set Manually</Choice>
                        <Swatch $gap={19} $left={41} aria-label="Uniform color" />
                        <Choice $gap={18}><Radio type="radio" name="uniform" />Use Light Colors</Choice>
                      </Indent>
                    </GroupBody>
                  </Group>
                </Columns>
              </Rollout>
            </Scrolled>
            <ScrollStrip />
          </Panel>
        </Dialog>

        <Overlay aria-label="Remote session">
          <OverlayButton aria-label="Full screen">
            <svg width="54" height="47"><path d="M10 18V8h11M34 8h10v10M44 29v10H34M21 39H10V29" fill="none" stroke="#1976d2" strokeWidth="6" /></svg>
          </OverlayButton>
          <OverlayButton aria-label="Keyboard">
            <svg width="54" height="47">
              <rect x="1" y="5" width="53" height="37" rx="5" fill="#1976d2" />
              <path d="M9 16h38M9 24h38" stroke="#d6d9da" strokeWidth="6" strokeDasharray="5 3" />
              <path d="M17 34h21" stroke="#d6d9da" strokeWidth="5" />
            </svg>
          </OverlayButton>
          <OverlayButton aria-label="Help">
            <svg width="54" height="47">
              <circle cx="27" cy="23" r="26" fill="#1976d2" />
              <path d="M19 16c0-12 17-12 17-1 0 8-8 9-8 17" fill="none" stroke="#d6d9da" strokeWidth="5" />
              <path d="M25 37h6v5h-6z" fill="#d6d9da" />
            </svg>
          </OverlayButton>
          <OverlayButton aria-label="Close session">
            <svg width="54" height="47"><path d="M11 7l33 33M44 7L11 40" stroke="#1976d2" strokeWidth="5" /></svg>
          </OverlayButton>
        </Overlay>
      </Desktop>
    </>
  );
}
